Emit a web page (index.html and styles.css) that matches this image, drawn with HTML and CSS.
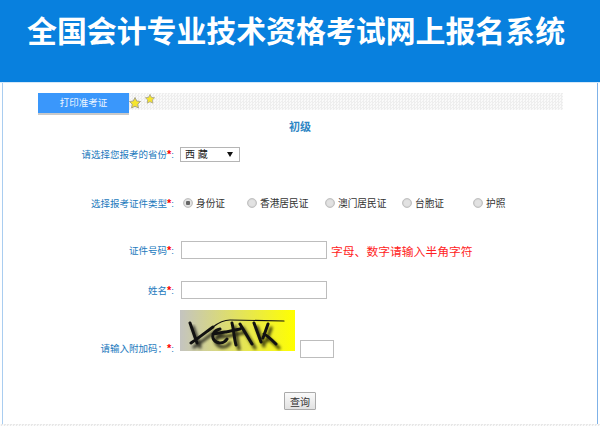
FILE: index.html

```html
<!DOCTYPE html>
<html lang="zh">
<head>
    <meta charset="UTF-8">
    <title>全国会计专业技术资格考试网上报名系统</title>
    <link rel="stylesheet" href="styles.css">
</head>
<body>
    <div class="header">
        <h1>全国会计专业技术资格考试网上报名系统</h1>
    </div>
    <div class="main">
        <div class="tabbar">
            <div class="tab">打印准考证</div>
            <svg class="star star1" viewBox="0 0 24 24"><path d="M12 1l3.400 7 7.600 1-5.500 5.300 1.300 7.700-6.800-3.600-6.800 3.600 1.300-7.700L1 9l7.600-1z"/></svg>
            <svg class="star star2" viewBox="0 0 24 24"><path d="M12 1l3.400 7 7.600 1-5.500 5.300 1.300 7.700-6.800-3.600-6.800 3.600 1.300-7.700L1 9l7.600-1z"/></svg>
        </div>
        <div class="level">初级</div>

        <div class="row row-province">
            <label>请选择您报考的省份<em>*</em>:</label>
            <div class="fake-select">西 藏<span class="arrow"></span></div>
        </div>

        <div class="row row-type">
            <label>选择报考证件类型<em>*</em>:</label>
            <div class="radios">
                <span class="radio r1 checked"><i></i>身份证</span>
                <span class="radio r2"><i></i>香港居民证</span>
                <span class="radio r3"><i></i>澳门居民证</span>
                <span class="radio r4"><i></i>台胞证</span>
                <span class="radio r5"><i></i>护照</span>
            </div>
        </div>

        <div class="row row-id">
            <label>证件号码<em>*</em>:</label>
            <input type="text" class="text">
            <span class="hint">字母、数字请输入半角字符</span>
        </div>

        <div class="row row-name">
            <label>姓名<em>*</em>:</label>
            <input type="text" class="text">
        </div>

        <div class="row row-code">
            <label>请输入附加码：<em>*</em>:</label>
            <svg class="captcha" viewBox="0 0 115 41">
                <defs>
                    <linearGradient id="bg">
                        <stop offset="0" stop-color="#c4c4c0"/>
                        <stop offset="1" stop-color="#ffff00"/>
                    </linearGradient>
                    <filter id="soft"><feGaussianBlur stdDeviation="1.800"/></filter>
                </defs>
                <rect width="115" height="41" fill="url(#bg)"/>
                <g class="shadow" filter="url(#soft)" transform="translate(3 4)">
                    <path d="M10 13l7 20M11 33C20 27 26 22 33 17M40 19c-6 1-9 7-6 11s10 4 13-1M33 24l12-2M52 13c2 8 2 15 4 22M46 22l14-3M60 14l12 20M74 13l7 19M88 14l-5 14M84 24c4 2 9 7 12 10"/>
                </g>
                <g class="ink">
                    <path d="M10 13l7 20M11 33C20 27 26 22 33 17M40 19c-6 1-9 7-6 11s10 4 13-1M33 24l12-2M52 13c2 8 2 15 4 22M46 22l14-3M60 14l12 20M74 13l7 19M88 14l-5 14M84 24c4 2 9 7 12 10"/>
                    <path class="thin" d="M33 17C38 13 44 10 50 10L104 11"/>
                </g>
            </svg>
            <input type="text" class="text small">
        </div>

        <div class="actions">
            <button type="button">查询</button>
        </div>
    </div>
    <div class="footer-line"></div>
</body>
</html>
```

FILE: styles.css

```css
html, body {
    margin: 0;
    padding: 0;
    height: 426px;
    overflow: hidden;
}
body {
    font-family: "Liberation Sans", "Noto Sans CJK SC", sans-serif;
    font-size: 9.5px;
    color: #333;
    background: #fff;
}
.header {
    height: 83px;
    background: #0880de;
    border-bottom: 1px solid #d5e8f8;
    box-sizing: border-box;
}
.header h1 {
    margin: 0;
    padding: 14px 0 0 27px;
    font-size: 29.900px;
    line-height: 36px;
    font-weight: bold;
    color: #fff;
    white-space: nowrap;
}
.main {
    height: 341px;
    margin: 0 2px;
    border-left: 1px solid #a9cdf0;
    border-right: 1px solid #7fb2e8;
    box-sizing: border-box;
    padding-top: 10px;
}
.tabbar {
    position: relative;
    height: 17px;
    margin: 0 34px 0 35px;
    background: repeating-conic-gradient(#eee 0 25%, #fafafa 0 50%) 0 0 / 3px 3px;
}
.tab {
    width: 91px;
    height: 20px;
    line-height: 20px;
    text-align: center;
    background: #3a97fb;
    box-shadow: 0 2px 0 #c9c9c9;
    color: #eef6ff;
}
.star {
    position: absolute;
    fill: #f5e52e;
    stroke: #a9a48a;
    stroke-width: 2;
}
.star1 { left: 91px; top: 4px; width: 12px; height: 12px; }
.star2 { left: 107px; top: 1px; width: 10px; height: 10px; }
.level {
    margin-top: 9px;
    text-align: center;
    font-size: 11px;
    line-height: 16px;
    font-weight: bold;
    color: #2f86c4;
}
.row {
    display: flex;
    align-items: center;
}
.row label {
    flex: none;
    width: 173px;
    padding-right: 2px;
    box-sizing: border-box;
    text-align: right;
    color: #2279bd;
}
.row label em {
    font-style: normal;
    font-size: 11px;
    font-weight: bold;
    color: #f00;
}
.row-province { margin-top: 11px; height: 16px; }
.row-type { margin-top: 33px; height: 16px; }
.row-id { margin-top: 30px; height: 18px; }
.row-name { margin-top: 22px; height: 18px; }
.row-code { margin-top: 11px; align-items: flex-start; }
.row-code label { margin-top: 31px; }
.fake-select {
    position: relative;
    width: 60px;
    height: 15px;
    margin-left: 4px;
    line-height: 13px;
    padding-left: 4px;
    border: 1px solid #b5b5b5;
    box-sizing: border-box;
    background: #fff;
    font-size: 10px;
    color: #222;
}
.arrow {
    position: absolute;
    right: 6px;
    top: 4px;
    border: 3px solid transparent;
    border-top: 5px solid #111;
    border-bottom: 0;
}
.radios {
    display: block;
    position: relative;
    height: 16px;
    flex: 1;
}
.radio {
    position: absolute;
    top: 0;
    display: flex;
    align-items: center;
    height: 16px;
    gap: 3px;
    white-space: nowrap;
    font-size: 9.700px;
    color: #333;
}
.radio i {
    width: 8px;
    height: 8px;
    border-radius: 50%;
    border: 1px solid #c2c2c2;
    background: #e2e2e2;
    box-shadow: inset 0 0 1px #999;
}
.radio.checked i {
    background: radial-gradient(circle, #666 0 2px, #e6e6e6 2.500px);
}
.r1 { left: 7px; }
.r2 { left: 71px; }
.r3 { left: 149px; }
.r4 { left: 226px; }
.r5 { left: 297px; }
.text {
    width: 146px;
    height: 18px;
    margin: 0 0 0 5px;
    padding: 0 2px;
    border: 1px solid #bdbdbd;
    box-sizing: border-box;
    background: #fff;
    outline: none;
}
.text.small {
    width: 34px;
    height: 18px;
    margin: 30px 0 0 4px;
}
.row-code .text.small { margin-left: 5px; }
.hint {
    margin-left: 4px;
    font-size: 11.800px;
    color: #f22;
}
.captcha {
    display: block;
    flex: none;
    width: 115px;
    height: 41px;
    margin-left: 4px;
}
.captcha path {
    fill: none;
    stroke-width: 3;
    stroke-linecap: round;
}
.captcha .shadow path { stroke: #000; stroke-opacity: 0.8; }
.captcha .ink path { stroke: #111; }
.captcha .ink .thin { stroke-width: 1.200; }
.actions {
    margin-top: 34px;
    text-align: center;
}
.actions button {
    width: 32px;
    height: 18px;
    padding: 0;
    border: 1px solid #aaa;
    border-radius: 1px;
    background: linear-gradient(#fafafa, #e2e2e2);
    font-family: inherit;
    font-size: 10px;
    color: #333;
}
.footer-line {
    height: 2px;
    background: repeating-conic-gradient(#e8e8e8 0 25%, #fafafa 0 50%) 0 0 / 3px 3px;
}
```
